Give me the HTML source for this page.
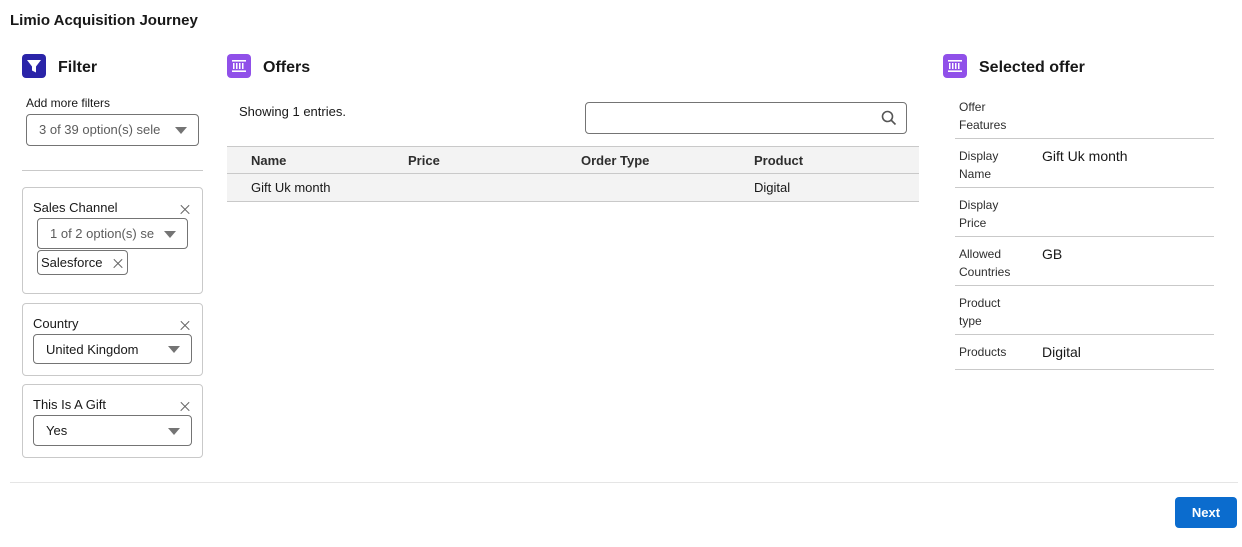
<!DOCTYPE html>
<html><head><meta charset="utf-8"><style>
*{box-sizing:border-box;margin:0;padding:0}
body{width:1242px;height:547px;background:#fff;font-family:"Liberation Sans",sans-serif;color:#181818;position:relative;overflow:hidden}
.a{position:absolute;white-space:nowrap}
.t{font-size:13px;line-height:16px}
.s{font-size:12px;line-height:16px;color:#2e2e2e}
.h{font-size:16px;font-weight:bold;line-height:20px}
.box{position:absolute;border:1px solid #c9c9c9;border-radius:4px}
.dd{position:absolute;border:1px solid #747474;border-radius:4px;background:#fff;font-size:13px;line-height:16px;padding-left:12px;overflow:hidden;white-space:nowrap}
.dd .tri{position:absolute;right:11px;top:50%;margin-top:-3px;width:0;height:0;border-left:6px solid transparent;border-right:6px solid transparent;border-top:7px solid #747474}
.x{position:absolute;width:10px;height:10px}
.x:before,.x:after{content:"";position:absolute;left:-1px;top:4.5px;width:12px;height:1.2px;background:#666;transform:rotate(45deg)}
.x:after{transform:rotate(-45deg)}
.hl{position:absolute;height:1px;background:#c9c9c9}
.icon{position:absolute;width:24px;height:24px;border-radius:4px}
</style></head><body>
<div class="a" style="left:10px;top:11px;font-size:15px;font-weight:bold;line-height:18px;top:12px">Limio Acquisition Journey</div>

<div class="icon" style="left:22px;top:54px;background:#2a24a8"><svg width="24" height="24"><path d="M5 6h14l-5 6.5v6l-4-2v-4z" fill="#fff"/></svg></div>
<div class="a h" style="left:58px;top:58px">Filter</div>
<div class="icon" style="left:227px;top:54px;background:#9050e9"><svg width="24" height="24"><rect x="5" y="6" width="14" height="1.6" fill="#fff"/><rect x="5" y="16.4" width="14" height="1.6" fill="#fff"/><rect x="6" y="9" width="1.5" height="6" fill="#fff"/><rect x="9" y="9" width="1.5" height="6" fill="#fff"/><rect x="12" y="9" width="1.5" height="6" fill="#fff"/><rect x="15" y="9" width="1.5" height="6" fill="#fff"/></svg></div>
<div class="a h" style="left:263px;top:58px">Offers</div>
<div class="icon" style="left:943px;top:54px;background:#9050e9"><svg width="24" height="24"><rect x="5" y="6" width="14" height="1.6" fill="#fff"/><rect x="5" y="16.4" width="14" height="1.6" fill="#fff"/><rect x="6" y="9" width="1.5" height="6" fill="#fff"/><rect x="9" y="9" width="1.5" height="6" fill="#fff"/><rect x="12" y="9" width="1.5" height="6" fill="#fff"/><rect x="15" y="9" width="1.5" height="6" fill="#fff"/></svg></div>
<div class="a h" style="left:979px;top:58px">Selected offer</div>

<div class="a s" style="left:26px;top:95px;color:#181818">Add more filters</div>
<div class="dd" style="left:26px;top:114px;width:173px;height:32px;line-height:30px;color:#5c5c5c">3 of 39 option(s) sele<span class="tri"></span></div>
<div class="hl" style="left:22px;top:170px;width:181px"></div>

<div class="box" style="left:22px;top:187px;width:181px;height:107px"></div>
<div class="a t" style="left:33px;top:200px">Sales Channel</div>
<div class="x" style="left:180px;top:204px"></div>
<div class="dd" style="left:37px;top:218px;width:151px;height:31px;line-height:29px;color:#5c5c5c">1 of 2 option(s) se<span class="tri"></span></div>
<div class="a t" style="left:37px;top:250px;width:91px;height:25px;border:1px solid #747474;border-radius:4px;padding-left:3px;line-height:23px">Salesforce<span class="x" style="left:75px;top:7px"></span></div>

<div class="box" style="left:22px;top:303px;width:181px;height:73px"></div>
<div class="a t" style="left:33px;top:316px">Country</div>
<div class="x" style="left:180px;top:320px"></div>
<div class="dd" style="left:33px;top:334px;width:159px;height:30px;line-height:29px">United Kingdom<span class="tri"></span></div>

<div class="box" style="left:22px;top:384px;width:181px;height:74px"></div>
<div class="a t" style="left:33px;top:397px">This Is A Gift</div>
<div class="x" style="left:180px;top:401px"></div>
<div class="dd" style="left:33px;top:415px;width:159px;height:31px;line-height:30px">Yes<span class="tri"></span></div>

<div class="a t" style="left:239px;top:104px">Showing 1 entries.</div>
<div class="a" style="left:585px;top:102px;width:322px;height:32px;border:1px solid #747474;border-radius:4px"><svg style="position:absolute;right:9px;top:7px" width="16" height="16"><circle cx="6.5" cy="6.5" r="5" fill="none" stroke="#555" stroke-width="1.6"/><path d="M10 10l4.5 4.5" stroke="#555" stroke-width="1.6"/></svg></div>

<div class="a" style="left:227px;top:146px;width:692px;height:56px;background:#f3f3f3;border-top:1px solid #c9c9c9;border-bottom:1px solid #c9c9c9"></div>
<div class="hl" style="left:227px;top:173px;width:692px"></div>
<div class="a t" style="left:251px;top:153px;font-weight:bold;color:#2e2e2e">Name</div>
<div class="a t" style="left:408px;top:153px;font-weight:bold;color:#2e2e2e">Price</div>
<div class="a t" style="left:581px;top:153px;font-weight:bold;color:#2e2e2e">Order Type</div>
<div class="a t" style="left:754px;top:153px;font-weight:bold;color:#2e2e2e">Product</div>
<div class="a t" style="left:251px;top:180px">Gift Uk month</div>
<div class="a t" style="left:754px;top:180px">Digital</div>

<div class="a s" style="left:959px;top:98px;line-height:18px;font-size:12px">Offer<br>Features</div>
<div class="hl" style="left:955px;top:138px;width:259px"></div>
<div class="a s" style="left:959px;top:147px;line-height:18px">Display<br>Name</div>
<div class="a" style="left:1042px;top:148px;font-size:14px;line-height:17px">Gift Uk month</div>
<div class="hl" style="left:955px;top:187px;width:259px"></div>
<div class="a s" style="left:959px;top:196px;line-height:18px">Display<br>Price</div>
<div class="hl" style="left:955px;top:236px;width:259px"></div>
<div class="a s" style="left:959px;top:245px;line-height:18px">Allowed<br>Countries</div>
<div class="a" style="left:1042px;top:246px;font-size:14px;line-height:17px">GB</div>
<div class="hl" style="left:955px;top:285px;width:259px"></div>
<div class="a s" style="left:959px;top:294px;line-height:18px">Product<br>type</div>
<div class="hl" style="left:955px;top:334px;width:259px"></div>
<div class="a s" style="left:959px;top:343px;line-height:18px">Products</div>
<div class="a" style="left:1042px;top:344px;font-size:14px;line-height:17px">Digital</div>
<div class="hl" style="left:955px;top:369px;width:259px"></div>

<div class="a" style="left:10px;top:482px;width:1228px;height:1px;background:#e5e5e5"></div>
<div class="a" style="left:1175px;top:497px;width:62px;height:31px;background:#0b6cce;border-radius:4px;color:#fff;font-size:13px;font-weight:bold;line-height:31px;text-align:center">Next</div>
</body></html>
